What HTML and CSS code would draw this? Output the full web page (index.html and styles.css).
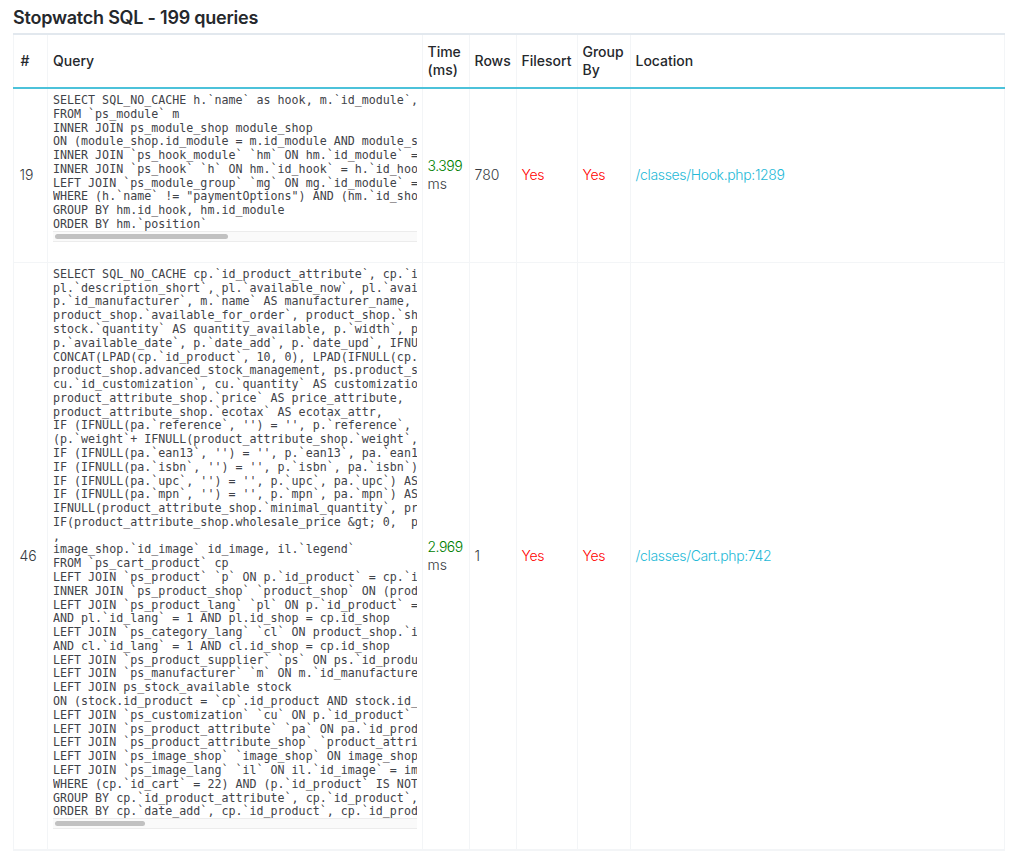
FILE: index.html
```html
<!DOCTYPE html>
<html lang="en">
<head>
<meta charset="utf-8">
<title>Stopwatch SQL</title>
<link rel="stylesheet" href="styles.css">
</head>
<body>
<h2 class="title">Stopwatch SQL - 199 queries</h2>
<table class="table">
<colgroup>
<col class="c-id"><col class="c-query"><col class="c-time"><col class="c-rows"><col class="c-sort"><col class="c-group"><col>
</colgroup>
<thead>
<tr><th class="idc">#</th><th class="qh">Query</th><th>Time (ms)</th><th>Rows</th><th>Filesort</th><th>Group By</th><th>Location</th></tr>
</thead>
<tbody>
<tr>
<td class="idc">19</td>
<td class="q"><pre class="sql">SELECT SQL_NO_CACHE h.`name` as hook, m.`id_module`, h.`id_hook`, m.`name` as module, h.`live_edit`
FROM `ps_module` m
INNER JOIN ps_module_shop module_shop
ON (module_shop.id_module = m.id_module AND module_shop.id_shop = 1)
INNER JOIN `ps_hook_module` `hm` ON hm.`id_module` = m.`id_module`
INNER JOIN `ps_hook` `h` ON hm.`id_hook` = h.`id_hook`
LEFT JOIN `ps_module_group` `mg` ON mg.`id_module` = m.`id_module`
WHERE (h.`name` != "paymentOptions") AND (hm.`id_shop` = 1) AND (mg.id_shop = 1 AND mg.`id_group` IN (1))
GROUP BY hm.id_hook, hm.id_module
ORDER BY hm.`position`</pre><div class="track"><div class="thumb" style="width:173px"></div></div></td>
<td><span class="good">3.399</span> ms</td>
<td>780</td>
<td class="bad">Yes</td>
<td class="bad">Yes</td>
<td><a class="loc" href="#">/classes/Hook.php:1289</a></td>
</tr>
<tr>
<td class="idc">46</td>
<td class="q"><pre class="sql">SELECT SQL_NO_CACHE cp.`id_product_attribute`, cp.`id_product`, cp.`quantity` AS cart_quantity, cp.id_shop, cp.`id_customization`, pl.`name`,
pl.`description_short`, pl.`available_now`, pl.`available_later`, product_shop.`id_category_default`, p.`id_supplier`,
p.`id_manufacturer`, m.`name` AS manufacturer_name, product_shop.`on_sale`, product_shop.`ecotax`, product_shop.`additional_shipping_cost`,
product_shop.`available_for_order`, product_shop.`show_price`, product_shop.`price`, product_shop.`active`, product_shop.`unity`, product_shop.`unit_price_ratio`,
stock.`quantity` AS quantity_available, p.`width`, p.`height`, p.`depth`, stock.`out_of_stock`, p.`weight`,
p.`available_date`, p.`date_add`, p.`date_upd`, IFNULL(stock.quantity, 0) as quantity,
CONCAT(LPAD(cp.`id_product`, 10, 0), LPAD(IFNULL(cp.`id_product_attribute`, 0), 10, 0), IFNULL(cp.`id_address_delivery`, 0), IFNULL(cp.`id_customization`, 0)) AS unique_id,
product_shop.advanced_stock_management, ps.product_supplier_reference supplier_reference,
cu.`id_customization`, cu.`quantity` AS customization_quantity,
product_attribute_shop.`price` AS price_attribute,
product_attribute_shop.`ecotax` AS ecotax_attr,
IF (IFNULL(pa.`reference`, '') = '', p.`reference`, pa.`reference`) AS reference,
(p.`weight`+ IFNULL(product_attribute_shop.`weight`, pa.`weight`)) weight_attribute,
IF (IFNULL(pa.`ean13`, '') = '', p.`ean13`, pa.`ean13`) AS ean13,
IF (IFNULL(pa.`isbn`, '') = '', p.`isbn`, pa.`isbn`) AS isbn,
IF (IFNULL(pa.`upc`, '') = '', p.`upc`, pa.`upc`) AS upc,
IF (IFNULL(pa.`mpn`, '') = '', p.`mpn`, pa.`mpn`) AS mpn,
IFNULL(product_attribute_shop.`minimal_quantity`, product_shop.`minimal_quantity`) as minimal_quantity,
IF(product_attribute_shop.wholesale_price &amp;gt; 0,  product_attribute_shop.wholesale_price, product_shop.`wholesale_price`) wholesale_price
,
image_shop.`id_image` id_image, il.`legend`
FROM `ps_cart_product` cp
LEFT JOIN `ps_product` `p` ON p.`id_product` = cp.`id_product`
INNER JOIN `ps_product_shop` `product_shop` ON (product_shop.`id_shop` = cp.`id_shop` AND product_shop.`id_product` = p.`id_product`)
LEFT JOIN `ps_product_lang` `pl` ON p.`id_product` = pl.`id_product`
AND pl.`id_lang` = 1 AND pl.id_shop = cp.id_shop
LEFT JOIN `ps_category_lang` `cl` ON product_shop.`id_category_default` = cl.`id_category`
AND cl.`id_lang` = 1 AND cl.id_shop = cp.id_shop
LEFT JOIN `ps_product_supplier` `ps` ON ps.`id_product` = cp.`id_product` AND ps.`id_product_attribute` = cp.`id_product_attribute`
LEFT JOIN `ps_manufacturer` `m` ON m.`id_manufacturer` = p.`id_manufacturer`
LEFT JOIN ps_stock_available stock
ON (stock.id_product = `cp`.id_product AND stock.id_product_attribute = 0 AND stock.id_shop = 1)
LEFT JOIN `ps_customization` `cu` ON p.`id_product` = cu.`id_product` AND cp.`id_customization` = cu.`id_customization`
LEFT JOIN `ps_product_attribute` `pa` ON pa.`id_product_attribute` = cp.`id_product_attribute`
LEFT JOIN `ps_product_attribute_shop` `product_attribute_shop` ON (product_attribute_shop.`id_shop` = cp.`id_shop`)
LEFT JOIN `ps_image_shop` `image_shop` ON image_shop.`id_product` = p.`id_product`
LEFT JOIN `ps_image_lang` `il` ON il.`id_image` = image_shop.`id_image`
WHERE (cp.`id_cart` = 22) AND (p.`id_product` IS NOT NULL)
GROUP BY cp.`id_product_attribute`, cp.`id_product`, cp.`id_shop`
ORDER BY cp.`date_add`, cp.`id_product`, cp.`id_product_attribute` ASC</pre><div class="track"><div class="thumb" style="width:90px"></div></div></td>
<td><span class="good">2.969</span> ms</td>
<td>1</td>
<td class="bad">Yes</td>
<td class="bad">Yes</td>
<td><a class="loc" href="#">/classes/Cart.php:742</a></td>
</tr>
<tr class="next"><td></td><td></td><td></td><td></td><td></td><td></td><td></td></tr>
</tbody>
</table>
</body>
</html>
```
FILE: styles.css
```css
html, body { margin: 0; padding: 0; background: #fff; }
body {
  width: 1024px;
  height: 854px;
  overflow: hidden;
  padding: 8px 19px 0 13px;
  box-sizing: border-box;
  font-family: Inter, "Noto Sans", sans-serif;
  font-size: 14px;
  color: #363a41;
}
.title {
  margin: 0 0 5px;
  font-family: Inter, sans-serif;
  font-size: 18px;
  font-weight: 600;
  line-height: 20px;
  letter-spacing: -0.23px;
  color: #25282c;
}
.table {
  width: 992px;
  table-layout: fixed;
  border-collapse: collapse;
  border-top: 2px solid #e2e8ee;
}
.c-id { width: 34px; }
.c-query { width: 375px; }
.c-time { width: 47px; }
.c-rows { width: 47px; }
.c-sort { width: 61px; }
.c-group { width: 53px; }
th, td {
  padding: 0 4px 0 4.5px;
  border-left: 1px solid #f3f5f7;
  border-right: 1px solid #f3f5f7;
  border-bottom: 1px solid #f3f5f7;
  vertical-align: middle;
  text-align: left;
  line-height: 18px;
}
td { font-weight: 300; }
th {
  height: 52px;
  font-weight: 500;
  color: #25282c;
  border-bottom: 2px solid #4cc2da;
}
th.idc { padding-left: 6.5px; }
td.idc { padding-left: 5.5px; }
th.qh { padding-left: 5px; }
td.q { padding: 5px 5px 20px 5px; vertical-align: top; }
.sql {
  margin: 0;
  overflow: hidden;
  font-family: "DejaVu Sans Mono", monospace;
  font-size: 11.67px;
  line-height: 13.78px;
  color: #3f4349;
}
.track {
  height: 11px;
  margin-top: -1px;
  padding: 2px;
  box-sizing: border-box;
  background: #fafafa;
  border-top: 1px solid #ececec;
  border-bottom: 1px solid #ececec;
}
.thumb {
  height: 100%;
  border-radius: 4px;
  background: #c1c1c1;
}
.good { color: #008000; letter-spacing: -0.5px; }
.bad { color: #ff0000; letter-spacing: -0.3px; }
.loc { color: #25b9d7; letter-spacing: -0.35px; text-decoration: none; }
```
